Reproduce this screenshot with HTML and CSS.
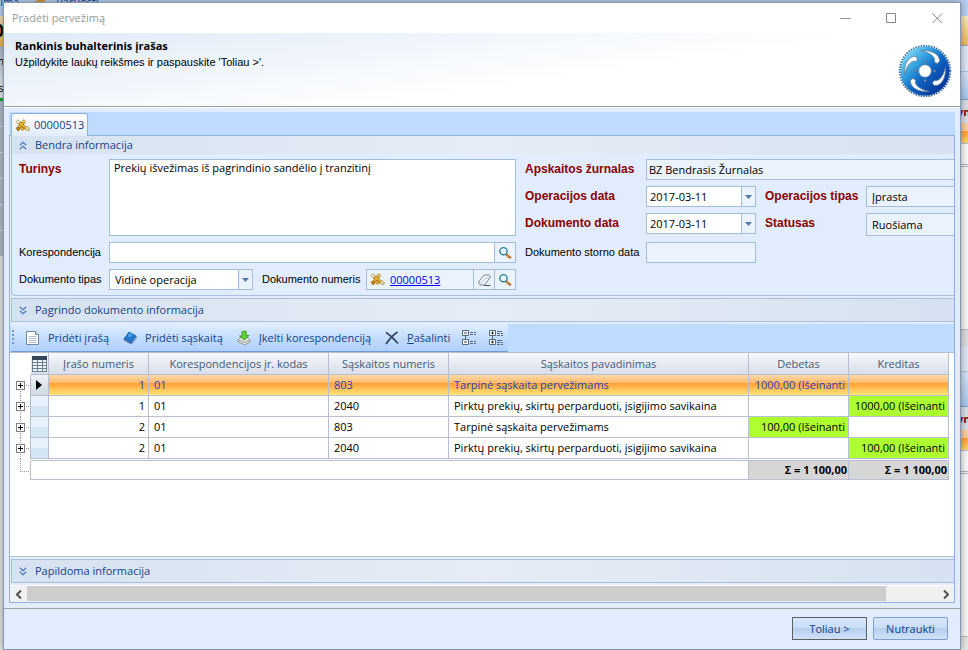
FILE: index.html
```html
<!DOCTYPE html>
<html lang="lt">
<head>
    <meta charset="UTF-8">
    <meta name="viewport" content="width=device-width, initial-scale=1.0">
    <title>Pradėti pervežimą</title>
    <link rel="stylesheet" href="styles.css">
</head>
<body>
    <svg width="0" height="0" class="sprite" aria-hidden="true">
        <symbol id="i-search" viewBox="0 0 14 14">
            <path d="M8.5 8.5l3.5 3" stroke="#b5651d" stroke-width="2.4" stroke-linecap="round"/>
            <path d="M8.6 8.3l3 2.6" stroke="#f0a860" stroke-width="1"/>
            <circle cx="5.5" cy="5.2" r="3.6" fill="#e4f6fc" stroke="#2f7f98" stroke-width="1.4"/>
            <path d="M3.6 5a2 2 0 0 1 2-1.8" stroke="#fff" fill="none"/>
        </symbol>
        <symbol id="i-entry" viewBox="0 0 14 12">
            <path d="M2.5 9.5L8 3M3 3l7 5.500" stroke="#9c6a08" stroke-width="3"/>
            <path d="M2.5 9L8 3M3 2.700l7 5.500" stroke="#eab32c" stroke-width="1.600"/>
            <path d="M.8 2.500L2.500.8l2.500 1.700-1.800 2z" fill="#fffbe8" stroke="#b99a55" stroke-width=".8"/>
            <path d="M6.500 2L8.500.6l1.500 2-1.800 1.600z" fill="#f6dc8e" stroke="#a97508" stroke-width=".7"/>
            <path d="M1 8.500l2-1 1.600 2-1.800 1.600z" fill="#d08c0c" stroke="#8a5c08" stroke-width=".7"/>
            <circle cx="7" cy="9.300" r="1.300" fill="#f3c44b" stroke="#a97508" stroke-width=".6"/>
            <path d="M9.500 7.200h2.200l1.500 1.400v2h-2l-1.700-1.400z" fill="#ecdca8" stroke="#b3914b" stroke-width=".8"/>
        </symbol>
        <symbol id="i-up" viewBox="0 0 8 9">
            <path d="M.8 4.2L4 1.2l3.2 3M.8 8.2L4 5.2l3.2 3" fill="none" stroke="#5c87bb" stroke-width="1.5"/>
        </symbol>
        <symbol id="i-down" viewBox="0 0 8 9">
            <path d="M.8.8L4 3.8l3.2-3M.8 4.8L4 7.8l3.2-3" fill="none" stroke="#5c87bb" stroke-width="1.5"/>
        </symbol>
        <symbol id="i-arrow" viewBox="0 0 7 4">
            <path d="M0 0h7L3.5 4z" fill="#5079b0"/>
        </symbol>
    </svg>

    <!-- pagrindinis programos langas už dialogo -->
    <div class="backdrop" aria-hidden="true">
        <div class="ribbon"><span>žima</span><svg width="14" height="4" viewBox="0 0 14 4"><path d="M1 3c3-4 8-5 12-3l-3 3z" fill="#d99a3a"/></svg><span>Paruošti</span></div>
        <div class="edges">
            <div class="edge edge-left">
                <div class="e-orange e-big">0</div>
                <div class="e-grey">m</div>
                <div class="e-page">es</div>
                <div class="e-list"></div>
            </div>
            <div class="edge edge-right">
                <div class="e-yellow"></div>
                <div class="e-light"></div>
                <div class="e-blue"></div>
                <div class="e-head">yn</div>
                <div class="e-orange-row"></div>
                <div class="e-lines"></div>
                <div class="e-white"></div>
                <div class="e-split"></div>
                <div class="e-light"></div>
                <div class="e-blue e-tall"></div>
                <div class="e-head">yn</div>
                <div class="e-orange-row"></div>
                <div class="e-lines"></div>
                <div class="e-white"></div>
            </div>
        </div>
    </div>

    <div class="dialog">
        <div class="titlebar">
            <span class="title">Pradėti pervežimą</span>
            <button type="button" class="win-btn" aria-label="Sumažinti"><svg width="11" height="11"><path d="M0 5.5h11" stroke="#999"/></svg></button>
            <button type="button" class="win-btn" aria-label="Padidinti"><svg width="11" height="11"><path d="M.5.5h9v9H.5z" fill="none" stroke="#888"/></svg></button>
            <button type="button" class="win-btn" aria-label="Uždaryti"><svg width="11" height="11"><path d="M.5.5l9.500 9.500M10 .5L.5 10" stroke="#888"/></svg></button>
        </div>

        <div class="header">
            <div>
                <h1>Rankinis buhalterinis įrašas</h1>
                <p>Užpildykite laukų reikšmes ir paspauskite 'Toliau &gt;'.</p>
            </div>
            <svg class="logo" width="56" height="56" viewBox="0 0 56 56">
                <defs>
                    <linearGradient id="disc" x1=".1" y1=".1" x2=".85" y2=".85">
                        <stop offset="0" stop-color="#86dcf8"/>
                        <stop offset=".35" stop-color="#2f9bdc"/>
                        <stop offset=".6" stop-color="#0f62c0"/>
                        <stop offset="1" stop-color="#06379c"/>
                    </linearGradient>
                </defs>
                <circle cx="28" cy="28" r="25" fill="none" stroke="#3c70a5" stroke-width="2.4" stroke-dasharray="1.5 1.118"/>
                <circle cx="28" cy="28" r="24.5" fill="url(#disc)"/>
                <g fill="#fff" stroke="#5f7f9c" stroke-width=".8">
                    <path id="blade" d="M24 7.500C33 7 41 10 42.500 16.500C43 20 39.500 22 37.500 18.500C39 13 31 9 24 7.500z"/>
                    <use href="#blade" transform="rotate(90 28 28)"/>
                    <use href="#blade" transform="rotate(180 28 28)"/>
                    <use href="#blade" transform="rotate(270 28 28)"/>
                    <circle cx="28" cy="28" r="6.300"/>
                </g>
                <g fill="#7c98b4" stroke="#3a618e" stroke-width=".5">
                    <circle cx="28" cy="18.500" r="1.200"/><circle cx="37.500" cy="28" r="1.200"/>
                    <circle cx="28" cy="37.500" r="1.200"/><circle cx="18.500" cy="28" r="1.200"/>
                </g>
            </svg>
        </div>

        <form class="content" id="entryForm">
            <div class="tabs">
                <button type="button" class="tab"><svg width="15" height="13"><use href="#i-entry"/></svg>00000513</button>
            </div>

            <div class="pane">
                <section class="group open">
                    <button type="button" class="group-head"><svg width="8" height="9"><use href="#i-up"/></svg>Bendra informacija</button>
                    <div class="fields">
                        <div class="main-fields">
                            <label class="required" for="turinys">Turinys</label>
                            <textarea id="turinys">Prekių išvežimas iš pagrindinio sandėlio į tranzitinį</textarea>

                            <label for="korespondencija">Korespondencija</label>
                            <div class="field">
                                <input type="text" id="korespondencija">
                                <button type="button" class="field-btn" aria-label="Ieškoti"><svg width="14" height="14"><use href="#i-search"/></svg></button>
                            </div>

                            <label for="tipas">Dokumento tipas</label>
                            <div class="doc-row">
                                <div class="field combo">
                                    <select id="tipas"><option>Vidinė operacija</option></select>
                                    <span class="drop"><svg width="7" height="4"><use href="#i-arrow"/></svg></span>
                                </div>
                                <span id="numerisLabel">Dokumento numeris</span>
                                <div class="field readonly doc-number" role="group" aria-labelledby="numerisLabel">
                                    <div class="doc-link"><svg width="15" height="13"><use href="#i-entry"/></svg><a href="#">00000513</a></div>
                                    <button type="button" class="field-btn" aria-label="Išvalyti">
                                        <svg width="15" height="14" viewBox="0 0 15 14"><path d="M1.500 9L7 2h5l1.500 2-6 8H3z" fill="#f4f7fb" stroke="#74859c"/><path d="M3 11.500L8.500 5H13" fill="none" stroke="#b9c3d2"/><path d="M7 12.500h6.500" stroke="#4a5668"/></svg>
                                    </button>
                                    <button type="button" class="field-btn" aria-label="Ieškoti"><svg width="14" height="14"><use href="#i-search"/></svg></button>
                                </div>
                            </div>
                        </div>

                        <div class="side-fields">
                            <label class="required" for="zurnalas">Apskaitos žurnalas</label>
                            <div class="field readonly cut wide"><input type="text" id="zurnalas" value="BZ Bendrasis Žurnalas" readonly></div>

                            <label class="required" for="opData">Operacijos data</label>
                            <div class="field">
                                <input type="text" id="opData" value="2017-03-11">
                                <button type="button" class="drop" aria-label="Pasirinkti datą"><svg width="7" height="4"><use href="#i-arrow"/></svg></button>
                            </div>
                            <label class="required second" for="opTipas">Operacijos tipas</label>
                            <div class="field readonly cut"><input type="text" id="opTipas" value="Įprasta" readonly></div>

                            <label class="required" for="dokData">Dokumento data</label>
                            <div class="field">
                                <input type="text" id="dokData" value="2017-03-11">
                                <button type="button" class="drop" aria-label="Pasirinkti datą"><svg width="7" height="4"><use href="#i-arrow"/></svg></button>
                            </div>
                            <label class="required second" for="statusas">Statusas</label>
                            <div class="field readonly cut tall"><input type="text" id="statusas" value="Ruošiama" readonly></div>

                            <label for="storno">Dokumento storno data</label>
                            <div class="field readonly"><input type="text" id="storno" readonly></div>
                        </div>
                    </div>
                </section>

                <section class="group">
                    <button type="button" class="group-head"><svg width="8" height="9"><use href="#i-down"/></svg>Pagrindo dokumento informacija</button>
                </section>

                <div class="toolbar-row">
                    <div class="toolbar">
                        <span class="grip"></span>
                        <button type="button">
                            <svg width="14" height="16" viewBox="0 0 14 16"><path d="M.5 1.500h9l3 3v10H.5z" fill="#fff" stroke="#7088a5"/><path d="M9.500 1.500v3h3" fill="#dce6f2" stroke="#7088a5"/><path d="M2.500 6.500h8M2.500 8.500h8M2.500 10.500h8M2.500 12.500h8" stroke="#b0bfd3"/></svg>
                            Pridėti įrašą
                        </button>
                        <button type="button">
                            <svg width="14" height="14" viewBox="0 0 14 14"><path d="M1 8l5-7 7 4-5 7z" fill="#2179cf" stroke="#1558a6" stroke-width=".8"/><path d="M6.500 2l3 1.600-2 3-3-1.600z" fill="#4fa4ee"/><path d="M1 8l7 4 5-6.500v2L8.500 13 1.500 9.500z" fill="#dfe9f4" stroke="#1c4f93" stroke-width=".7"/></svg>
                            Pridėti sąskaitą
                        </button>
                        <button type="button">
                            <svg width="14" height="16" viewBox="0 0 14 16"><path d="M1 10l3-3h6l3 3v2l-5 3-7-3z" fill="#e2e2e2" stroke="#858585" stroke-width=".8"/><path d="M1 10l7 2.500 5-2.500" fill="none" stroke="#8e8e8e" stroke-width=".8"/><path d="M5 1.500l4-.5.500 4.500H12L7.500 10 2.500 6H5z" fill="#5fd32f" stroke="#2d8f16" stroke-width=".8"/></svg>
                            Įkelti korespondenciją
                        </button>
                        <button type="button">
                            <svg width="14" height="14" viewBox="0 0 14 14"><path d="M1 1.500c4 2.500 8 6.500 12 11M12.500 1C8 4 4.500 8 1 13" fill="none" stroke="#34435a" stroke-width="1.700"/></svg>
                            <span><u>P</u>ašalinti</span>
                        </button>
                        <button type="button" class="icon-only" aria-label="Sutraukti">
                            <svg width="16" height="17" viewBox="0 0 16 17"><path d="M1.500 1.500h6v5h-6zM1.500 10.500h6v5h-6z" fill="#fff" stroke="#55697f"/><path d="M3 4h3M3 13h3" stroke="#26384e"/><path d="M4.500 7v3" stroke="#55697f"/><path d="M9 3.500h3M13 3.500h2M9 5.500h3M13 5.500h2M9 12.500h3M13 12.500h2M9 14.500h3M13 14.500h2" stroke="#55697f"/></svg>
                        </button>
                        <button type="button" class="icon-only" aria-label="Išskleisti">
                            <svg width="16" height="17" viewBox="0 0 16 17"><path d="M1.500 1.500h6v5h-6zM1.500 10.500h6v5h-6z" fill="#fff" stroke="#55697f"/><path d="M3 4h3M4.500 2.500v3M3 13h3M4.500 11.500v3" stroke="#26384e"/><path d="M4.500 7v3" stroke="#55697f"/><path d="M9 2.500h5M9 4.500h3M13 4.500h2M9 6.500h3M13 6.500h2M9 11.500h5M9 13.500h3M13 13.500h2M9 15.500h3M13 15.500h2" stroke="#55697f"/></svg>
                        </button>
                    </div>
                </div>

                <div class="grid-area">
                    <table class="grid">
                        <colgroup>
                            <col class="c-tree"><col class="c-mark"><col class="c-amount"><col class="c-code"><col class="c-account"><col><col class="c-amount"><col class="c-amount">
                        </colgroup>
                        <thead>
                            <tr>
                                <td class="tree"></td>
                                <th class="picker"><svg width="15" height="16" viewBox="0 0 15 16"><path d="M0 0h15v16H0z" fill="#6d8196"/><path d="M0 0h15v4H0z" fill="#34465a"/><path d="M1 4h4v2H1zM6 4h4v2H6zM11 4h3v2h-3zM1 7h4v2H1zM6 7h4v2H6zM11 7h3v2h-3zM1 10h4v2H1zM6 10h4v2H6zM11 10h3v2h-3zM1 13h4v2H1zM6 13h4v2H6zM11 13h3v2h-3z" fill="#eef4fa"/></svg></th>
                                <th>Įrašo numeris</th>
                                <th>Korespondencijos įr. kodas</th>
                                <th>Sąskaitos numeris</th>
                                <th>Sąskaitos pavadinimas</th>
                                <th>Debetas</th>
                                <th>Kreditas</th>
                            </tr>
                        </thead>
                        <tbody>
                            <tr class="selected">
                                <td class="tree first"><button type="button" aria-label="Išskleisti"></button></td>
                                <td class="mark"><svg width="6" height="10"><path d="M0 0l6 5-6 5z" fill="#000"/></svg></td>
                                <td class="num">1</td><td>01</td><td>803</td><td>Tarpinė sąskaita pervežimams</td>
                                <td class="num">1000,00 (Išeinanti</td><td></td>
                            </tr>
                            <tr>
                                <td class="tree"><button type="button" aria-label="Išskleisti"></button></td>
                                <td class="mark"></td>
                                <td class="num">1</td><td>01</td><td>2040</td><td>Pirktų prekių, skirtų perparduoti, įsigijimo savikaina</td>
                                <td></td><td class="num green">1000,00 (Išeinanti</td>
                            </tr>
                            <tr>
                                <td class="tree"><button type="button" aria-label="Išskleisti"></button></td>
                                <td class="mark"></td>
                                <td class="num">2</td><td>01</td><td>803</td><td>Tarpinė sąskaita pervežimams</td>
                                <td class="num green">100,00 (Išeinanti</td><td></td>
                            </tr>
                            <tr>
                                <td class="tree"><button type="button" aria-label="Išskleisti"></button></td>
                                <td class="mark"></td>
                                <td class="num">2</td><td>01</td><td>2040</td><td>Pirktų prekių, skirtų perparduoti, įsigijimo savikaina</td>
                                <td></td><td class="num green">100,00 (Išeinanti</td>
                            </tr>
                        </tbody>
                        <tfoot>
                            <tr class="gap"><td class="tree"></td><td colspan="7"></td></tr>
                            <tr>
                                <td class="tree last"></td>
                                <td class="empty" colspan="5"></td>
                                <td class="sum">Σ = 1 100,00</td>
                                <td class="sum">Σ = 1 100,00</td>
                            </tr>
                        </tfoot>
                    </table>
                </div>

                <section class="group">
                    <button type="button" class="group-head"><svg width="8" height="9"><use href="#i-down"/></svg>Papildoma informacija</button>
                </section>

                <div class="scrollbar">
                    <button type="button" aria-label="Kairėn"><svg width="6" height="9"><path d="M5 .5l-4 4 4 4" fill="none" stroke="#505050" stroke-width="2"/></svg></button>
                    <div class="track"><div class="thumb"></div></div>
                    <button type="button" aria-label="Dešinėn"><svg width="6" height="9"><path d="M1 .5l4 4-4 4" fill="none" stroke="#505050" stroke-width="2"/></svg></button>
                </div>
            </div>
        </form>

        <div class="footer">
            <button type="submit" form="entryForm" class="btn default">Toliau &gt;</button>
            <button type="button" class="btn">Nutraukti</button>
        </div>
    </div>
</body>
</html>
```

FILE: styles.css
```css
* {
    margin: 0;
    padding: 0;
    box-sizing: border-box;
}

body {
    height: 100vh;
    overflow: hidden;
    position: relative;
    font-family: "Open Sans", "Noto Sans", sans-serif;
    font-size: 11px;
    line-height: 16px;
    color: #000;
    background: #e6e6e4;
}

button, input, select, textarea {
    font: inherit;
    color: inherit;
    background: none;
    border: none;
    border-radius: 0;
    outline: none;
}

svg {
    display: block;
    flex: none;
}

.sprite {
    position: absolute;
}

/* Fonas */
.backdrop {
    height: 100vh;
    display: flex;
    flex-direction: column;
}

.ribbon {
    display: flex;
    gap: 14px;
    height: 16px;
    background: #b9d2f5;
    color: #15428b;
    line-height: 4px;
    text-indent: -5px;
}

.edges {
    flex: 1;
    display: flex;
    justify-content: space-between;
}

.edge {
    width: 8px;
    overflow: hidden;
}

.edge div { overflow: hidden; }
.e-orange { height: 30px; background: linear-gradient(#f7e6b4, #f0b45c); }
.e-big { font-size: 17px; font-weight: 700; line-height: 30px; text-indent: -6px; }
.e-grey { height: 29px; line-height: 30px; text-indent: -6px; background: linear-gradient(#aebdcb, #d5dee6); }
.e-page { height: 26px; line-height: 26px; text-indent: -8px; background: #e2e8ee; border-bottom: 3px solid #12a63a; }
.e-list { height: 155px; background: repeating-linear-gradient(#b3bfcc 0 25px, #dce3ea 25px 26px); }
.e-yellow { height: 30px; background: linear-gradient(#f7ecc0, #efb860); border-bottom: 1px solid #8fa8c8; }
.e-light { height: 26px; background: #dfe8f5; border-bottom: 1px solid #a9c4e8; }
.e-blue { height: 28px; background: linear-gradient(#d5e4f7, #a9c9f0); border-bottom: 1px solid #7a9cc8; }
.e-tall { height: 35px; }
.e-head { height: 23px; line-height: 23px; font-weight: 700; color: #8b0000; background: #d9dfe8; text-indent: -3px; }
.e-orange-row { height: 21px; background: linear-gradient(#fbd0a0 0 38%, #ff9f37 38%, #ffd870); border-bottom: 1px solid #b9c3d6; }
.e-lines { height: 23px; background: #fafafa; border-bottom: 3px double #b0b4bc; }
.e-white { height: 163px; background: #f9f9f9; border-bottom: 1px solid #b8bcc6; }
.e-split { height: 16px; background: #dedede; }

/* Dialogas */
.dialog {
    position: absolute;
    inset: 2px 7px 0 3px;
    display: flex;
    flex-direction: column;
    background: #e1ecff;
    border: 1px solid #8597af;
    box-shadow: 0 0 8px rgba(0, 0, 0, 0.4);
}

.titlebar {
    display: flex;
    height: 30px;
    align-items: center;
    background: #fff;
}

.title {
    flex: 1;
    padding-left: 8px;
    color: #999;
}

.win-btn {
    width: 46px;
    height: 30px;
    display: flex;
    align-items: center;
    justify-content: center;
}

.header {
    display: flex;
    justify-content: space-between;
    height: 74px;
    padding: 5px 7px 0 11px;
    background: linear-gradient(172deg, #dfeaf7 0, #eef4fb 28%, #fff 60%);
    border-bottom: 1px solid #a0a0a0;
}

.header h1 {
    font-size: 11px;
    font-weight: 700;
    line-height: 16px;
}

.header p {
    font-family: "Liberation Sans", sans-serif;
}

.logo {
    margin-top: 5px;
}

.content {
    flex: 1;
    display: flex;
    flex-direction: column;
    padding: 4px 5px 5px;
    border-top: 1px solid #fff;
}

.tabs {
    display: flex;
    height: 24px;
    padding: 1px 2px 0;
    background: #bfdbff;
    border-bottom: 1px solid #8db2e3;
}

.tab {
    display: flex;
    align-items: center;
    gap: 4px;
    height: 23px;
    padding: 0 3px;
    color: #15428b;
    background: linear-gradient(#fff, #e1ecff);
    border: 1px solid #8db2e3;
    border-bottom: none;
    border-radius: 3px 3px 0 0;
}

.pane {
    flex: 1;
    display: flex;
    flex-direction: column;
    overflow: hidden;
    border: 1px solid #8db2e3;
    border-top: none;
}

.group {
    margin: 2px 0 0 1px;
    border: 1px solid #a9bfdb;
    border-right: none;
}

.group.open {
    margin-top: 0;
    border-top: none;
    border-radius: 0 0 0 4px;
}

.group-head {
    display: flex;
    align-items: center;
    gap: 8px;
    width: 100%;
    height: 22px;
    padding: 0 7px;
    color: #15428b;
    text-align: left;
    background: linear-gradient(to right, #d6e2f1, #e5ecf5 50%, #d6e2f1);
}

.group.open .group-head {
    height: 18px;
}

/* Formos laukai */
.fields {
    display: flex;
    gap: 9px;
    padding: 5px 0 5px 7px;
}

.main-fields {
    flex: 1;
    min-width: 0;
    display: grid;
    grid-template-columns: 90px minmax(0, 1fr);
    row-gap: 6px;
}

.side-fields {
    flex: none;
    display: grid;
    grid-template-columns: 121px 110px 110px 1fr;
    row-gap: 6px;
    align-content: start;
    width: 429px;
}

.side-fields .second {
    padding-left: 9px;
}

.side-fields .wide {
    grid-column: span 3;
}

label, #numerisLabel {
    font-family: "Liberation Sans", sans-serif;
    line-height: 20px;
    white-space: nowrap;
}

label.required {
    font-weight: 700;
    font-size: 12px;
    color: #8b0000;
}

textarea {
    width: 100%;
    height: 77px;
    padding: 0 4px;
    resize: none;
    background: #fff;
    border: 1px solid #a3bddd;
}

.field {
    display: flex;
    height: 21px;
    background: #fff;
    border: 1px solid #a3bddd;
}

.field.readonly {
    background: #eaf2fc;
}

.field.cut {
    border-right: none;
}

.field.tall {
    height: 23px;
}

.field input, .field select {
    flex: 1;
    min-width: 0;
    padding: 0 3px;
    appearance: none;
}

.field select, .field.cut input {
    padding: 0 5px;
}

.field.wide input {
    padding: 0 2px;
}

.field-btn, .drop {
    display: flex;
    align-items: center;
    justify-content: center;
    width: 21px;
    background: #eaf2fc;
    border-left: 1px solid #a3bddd;
}

.drop {
    width: 14px;
}

.doc-row {
    display: flex;
    gap: 9px;
}

.combo {
    flex: none;
    width: 144px;
}

#numerisLabel {
    flex: 1;
    min-width: 0;
}

.doc-number {
    flex: none;
    width: 150px;
}

.doc-link {
    flex: 1;
    display: flex;
    align-items: center;
    gap: 5px;
    padding-left: 3px;
}

.doc-link a {
    color: #00f;
}

/* Įrankių juosta */
.toolbar-row {
    display: flex;
    margin-top: 2px;
    padding-left: 1px;
    background: #bfdbff;
}

.toolbar {
    display: flex;
    align-items: center;
    gap: 14px;
    height: 28px;
    padding: 0 4px 0 1px;
    color: #15428b;
    background: linear-gradient(#e0eeff, #c4ddff 50%, #b0d0fb);
    border-bottom: 1px solid #6f9bd8;
    border-radius: 0 3px 0 0;
}

.toolbar button {
    display: flex;
    align-items: center;
    gap: 8px;
}

.toolbar .icon-only {
    margin-left: -3px;
}

.grip {
    width: 2px;
    height: 15px;
    margin-right: -2px;
    background: repeating-linear-gradient(#6f9bd8 0 2px, transparent 2px 4px);
}

/* Lentelė */
.grid-area {
    flex: 1;
    padding: 0 5px 0 1px;
    background: #fff;
    border-top: 1px solid #b4bfd2;
    border-bottom: 1px solid #b4bfd2;
}

.grid {
    width: 100%;
    table-layout: fixed;
    border-collapse: separate;
    border-spacing: 0;
}

.c-tree { width: 20px; }
.c-mark { width: 18px; }
.c-amount { width: 100px; }
.c-code { width: 180px; }
.c-account { width: 120px; }

.grid th {
    height: 22px;
    font-weight: 400;
    color: #44597c;
    background: linear-gradient(#f6f8fb, #d8dee9);
    border-right: 1px solid #b9bfd1;
    border-bottom: 1px solid #b9bfd1;
}

.grid th.picker {
    padding-left: 1px;
}

.grid td {
    height: 21px;
    padding: 0 5px;
    line-height: 20px;
    vertical-align: top;
    white-space: nowrap;
    border-right: 1px solid #b9bfd1;
    border-bottom: 1px solid #b9bfd1;
}

.grid td.num {
    padding: 0 3px;
    text-align: right;
}

.grid td.green {
    background: #adff2f;
}

.grid .selected td {
    color: #2a3fb8;
    background: linear-gradient(#ffd9aa 0, #ffbb6e 38%, #ff9f37 40%, #ffe477);
}

.grid td.mark {
    padding: 0 5px;
    vertical-align: middle;
    background: linear-gradient(#e6f1fb 50%, #d4e5f4 50%);
}

.grid .selected td.mark {
    background: linear-gradient(#eef1f5, #cfd9e4);
}

/* Medžio linijos */
.grid .tree {
    padding: 6px 0 0 5px;
    border-bottom: none;
}

.grid thead .tree {
    padding: 0;
    border-right: none;
}

.grid tbody .tree, .grid .gap .tree {
    background: repeating-linear-gradient(#999 0 1px, transparent 1px 2px) no-repeat 9px 0 / 1px 100%,
        repeating-linear-gradient(to right, #999 0 1px, transparent 1px 2px) no-repeat 15px 10px / 4px 1px;
}

.grid .selected td.first {
    background: repeating-linear-gradient(#999 0 1px, transparent 1px 2px) no-repeat 9px 10px / 1px 100%,
        repeating-linear-gradient(to right, #999 0 1px, transparent 1px 2px) no-repeat 15px 10px / 4px 1px;
}

.grid .tree.last {
    background: repeating-linear-gradient(#999 0 1px, transparent 1px 2px) no-repeat 9px 0 / 1px 10px,
        repeating-linear-gradient(to right, #999 0 1px, transparent 1px 2px) no-repeat 9px 10px / 9px 1px;
}

.tree button {
    display: block;
    width: 9px;
    height: 9px;
    background: linear-gradient(#000, #000) center / 5px 1px no-repeat,
        linear-gradient(#000, #000) center / 1px 5px no-repeat, #fff;
    border: 1px solid #808080;
}

.grid .gap td {
    height: 2px;
    padding: 0;
    border-right-color: transparent;
}

.grid tfoot td {
    height: 19px;
    line-height: 18px;
}

.grid .sum {
    padding: 0 1px;
    font-weight: 700;
    text-align: right;
    background: #d6d6d6;
}

/* Apačia */
.scrollbar {
    display: flex;
    height: 17px;
    margin-top: 2px;
    background: #f0f0f0;
    border-top: 1px solid #fff;
}

.scrollbar button {
    display: flex;
    align-items: center;
    justify-content: center;
    width: 17px;
}

.track {
    flex: 1;
    padding-right: 51px;
}

.thumb {
    height: 15px;
    background: #cdcdcd;
}

.footer {
    display: flex;
    justify-content: flex-end;
    gap: 6px;
    height: 41px;
    padding: 8px 12px 0;
    border-top: 1px solid #a0a0a0;
}

.btn {
    width: 75px;
    height: 23px;
    color: #15428b;
    background: linear-gradient(#d6e6fb, #c9def8 45%, #b6cfee 50%, #cfe2fb);
    border: 1px solid #7f9fd0;
    border-radius: 2px;
}

.btn.default {
    border-color: #606060;
    border-radius: 0;
}
```
